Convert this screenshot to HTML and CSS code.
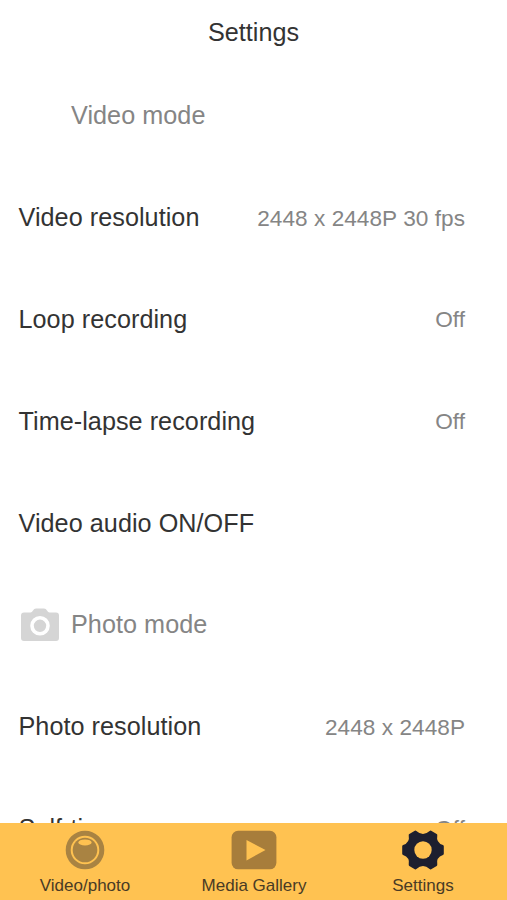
FILE: index.html
```html
<!DOCTYPE html>
<html lang="en">
<head>
<meta charset="utf-8">
<title>Settings</title>
<link rel="stylesheet" href="styles.css">
</head>
<body>
<div class="app">
  <header class="header"><h1 class="title">Settings</h1></header>
  <main class="list">
    <div class="row section"><span class="section-icon"></span><span>Video mode</span></div>
    <div class="row"><span>Video resolution</span><span class="value">2448 x 2448P 30 fps</span></div>
    <div class="row"><span>Loop recording</span><span class="value">Off</span></div>
    <div class="row"><span>Time-lapse recording</span><span class="value">Off</span></div>
    <div class="row"><span>Video audio ON/OFF</span></div>
    <div class="row section">
      <svg class="section-icon" viewBox="0 0 38 34">
        <path fill="#d5d5d5" d="M3 4.500H9.500Q11 4.500 12 2.500Q13 .5 15 .5H23Q25 .5 26 2.500Q27 4.500 28.500 4.500H35Q38 4.500 38 7.500V30Q38 33 35 33H3Q0 33 0 30V7.500Q0 4.500 3 4.500Z"/>
        <circle cx="19" cy="17.800" r="8" fill="none" stroke="#fff" stroke-width="3.600"/>
      </svg>
      <span>Photo mode</span>
    </div>
    <div class="row"><span>Photo resolution</span><span class="value">2448 x 2448P</span></div>
    <div class="row"><span>Self-timer</span><span class="value">Off</span></div>
  </main>
  <nav class="tabs">
    <a class="tab">
      <svg class="tab-icon" viewBox="0 0 44 42">
        <circle cx="22" cy="21" r="16.800" fill="none" stroke="#a98342" stroke-width="5"/>
        <circle cx="22" cy="21" r="12.300" fill="#a98342"/>
        <ellipse cx="22" cy="13.400" rx="6.600" ry="3" fill="#ffc251"/>
      </svg>
      <span>Video/photo</span>
    </a>
    <a class="tab">
      <svg class="tab-icon" viewBox="0 0 44 42">
        <rect x="-.4" y="1.800" width="44.800" height="38.500" rx="6.500" fill="#a77d3b"/>
        <path fill="#ffc251" d="M14.500 11V31.500L33.500 21Z"/>
      </svg>
      <span>Media Gallery</span>
    </a>
    <a class="tab">
      <svg class="tab-icon" viewBox="0 0 44 42">
        <path fill="#1d1f2f" stroke="#1d1f2f" stroke-width="2.600" stroke-linejoin="round" d="M2.500 17.200Q10.600 14.400 9 6.200L14.500 2.900Q22 9.600 29.500 2.900L35 6.200Q33.400 14.400 41.500 17.200V24.800Q33.400 27.600 35 35.800L29.500 39.100Q22 32.400 14.500 39.100L9 35.800Q10.600 27.600 2.500 24.800Z"/>
        <circle cx="22" cy="21" r="8.700" fill="#ffc251"/>
      </svg>
      <span>Settings</span>
    </a>
  </nav>
</div>
</body>
</html>
```
FILE: styles.css
```css
* { box-sizing: border-box; }
body {
  margin: 0;
  background: #fff;
  color: #333;
  font-family: "Liberation Sans", Arial, sans-serif;
  font-size: 25.2px;
}
.app {
  display: flex;
  flex-direction: column;
  height: 900px;
  overflow: hidden;
}
.header {
  flex: none;
  height: 65px;
  padding-bottom: 1px;
  display: flex;
  align-items: center;
  justify-content: center;
}
.title {
  margin: 0;
  font-size: inherit;
  font-weight: 400;
}
.list {
  flex: 1;
  min-height: 0;
  overflow: hidden;
}
.row {
  height: 101.8px;
  padding: 0 42px 0 18.500px;
  display: flex;
  align-items: center;
  justify-content: space-between;
  white-space: nowrap;
  letter-spacing: .05px;
}
.section {
  justify-content: flex-start;
  gap: 12px;
  padding-left: 21px;
  color: #858585;
}
.section-icon {
  flex: none;
  width: 38px;
  height: 34px;
}
.value {
  color: #858585;
  font-size: 22.600px;
  padding-top: 2px;
}
.tabs {
  flex: none;
  height: 77px;
  display: grid;
  grid-template-columns: repeat(3, 1fr);
  background: #ffc251;
}
.tab {
  display: flex;
  flex-direction: column;
  align-items: center;
  padding: 6px 0 0 1px;
  font-size: 17px;
  line-height: 20px;
  color: #493b25;
}
.tab-icon {
  width: 44px;
  height: 42px;
  margin-bottom: 5px;
  overflow: visible;
}
```
